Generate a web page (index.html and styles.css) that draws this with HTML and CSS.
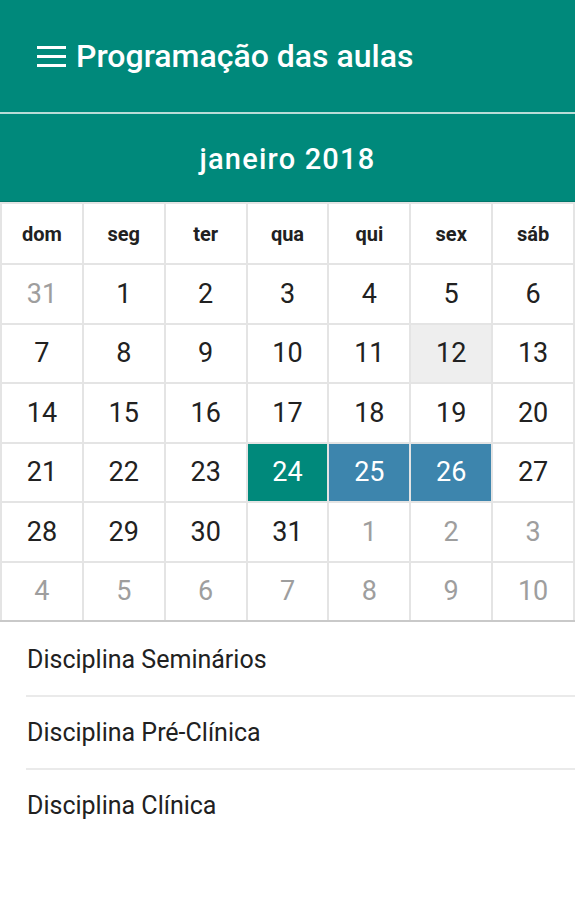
FILE: index.html
```html
<!DOCTYPE html>
<html lang="pt-BR">
<head>
    <meta charset="UTF-8">
    <meta name="viewport" content="width=device-width, initial-scale=1.0">
    <title>Programação das aulas</title>
    <link rel="stylesheet" href="styles.css">
</head>
<body>

<header class="toolbar">
    <svg class="menu-icon" width="29" height="22" viewBox="0 0 29 22">
        <rect x="0" y="0" width="29" height="3" fill="#fff"/>
        <rect x="0" y="9" width="29" height="3" fill="#fff"/>
        <rect x="0" y="18" width="29" height="3" fill="#fff"/>
    </svg>
    <h1>Programação das aulas</h1>
</header>

<div class="month">janeiro 2018</div>

<div class="calendar">
    <div class="weekday">dom</div>
    <div class="weekday">seg</div>
    <div class="weekday">ter</div>
    <div class="weekday">qua</div>
    <div class="weekday">qui</div>
    <div class="weekday">sex</div>
    <div class="weekday">sáb</div>

    <div class="day other">31</div>
    <div class="day">1</div>
    <div class="day">2</div>
    <div class="day">3</div>
    <div class="day">4</div>
    <div class="day">5</div>
    <div class="day">6</div>

    <div class="day">7</div>
    <div class="day">8</div>
    <div class="day">9</div>
    <div class="day">10</div>
    <div class="day">11</div>
    <div class="day today">12</div>
    <div class="day">13</div>

    <div class="day">14</div>
    <div class="day">15</div>
    <div class="day">16</div>
    <div class="day">17</div>
    <div class="day">18</div>
    <div class="day">19</div>
    <div class="day">20</div>

    <div class="day">21</div>
    <div class="day">22</div>
    <div class="day">23</div>
    <div class="day selected">24</div>
    <div class="day event">25</div>
    <div class="day event">26</div>
    <div class="day">27</div>

    <div class="day">28</div>
    <div class="day">29</div>
    <div class="day">30</div>
    <div class="day">31</div>
    <div class="day other">1</div>
    <div class="day other">2</div>
    <div class="day other">3</div>

    <div class="day other">4</div>
    <div class="day other">5</div>
    <div class="day other">6</div>
    <div class="day other">7</div>
    <div class="day other">8</div>
    <div class="day other">9</div>
    <div class="day other">10</div>
</div>

<ul class="courses">
    <li>Disciplina Seminários</li>
    <li>Disciplina Pré-Clínica</li>
    <li>Disciplina Clínica</li>
</ul>

</body>
</html>
```

FILE: styles.css
```css
body {
    margin: 0;
    font-family: Roboto, 'Noto Sans', sans-serif;
    background: #fff;
    color: #212121;
}
.toolbar {
    height: 112px;
    background: #00897b;
    display: flex;
    align-items: center;
    padding-left: 37px;
    border-bottom: 2px solid #b9dcd7;
}
.menu-icon {
    margin-right: 10px;
    margin-top: 1px;
}
.toolbar h1 {
    margin: 0;
    color: #fff;
    font-size: 32px;
    font-weight: 500;
}
.month {
    height: 88px;
    box-sizing: border-box;
    padding-top: 3px;
    background: #00897b;
    border-bottom: 1px solid #00766a;
    color: #fff;
    font-size: 29px;
    letter-spacing: 1.2px;
    font-weight: 500;
    display: flex;
    align-items: center;
    justify-content: center;
}
.calendar {
    display: grid;
    grid-template-columns: repeat(7, 1fr);
    grid-template-rows: 59px repeat(6, 57.5px);
    gap: 2px;
    padding: 2px 2px 0;
    background: #e4e4e4;
    border-bottom: 2px solid #c9c9c9;
}
.weekday, .day {
    background: #fff;
    display: flex;
    align-items: center;
    justify-content: center;
}
.weekday {
    font-size: 20px;
    font-weight: 700;
}
.day {
    font-size: 27px;
}
.day.other {
    color: #9e9e9e;
}
.day.today {
    background: #eeeeee;
}
.day.selected {
    background: #00897b;
    color: #fff;
}
.day.event {
    background: #3d85ad;
    color: #fff;
}
.courses {
    list-style: none;
    margin: 0;
    padding: 2px 0 0;
}
.courses li {
    height: 71px;
    display: flex;
    align-items: center;
    margin-left: 26px;
    padding-left: 1px;
    font-size: 25px;
    border-bottom: 2px solid #eaeaea;
}
.courses li:last-child {
    border-bottom: none;
}
```
